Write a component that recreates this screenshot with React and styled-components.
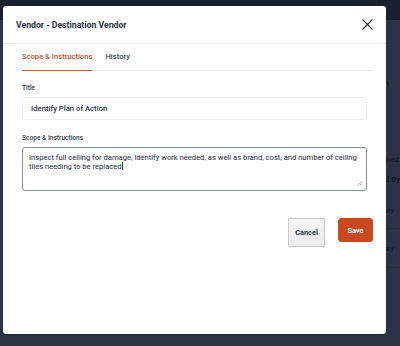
import React from "react";
import styled, { createGlobalStyle } from "styled-components";

const GlobalStyle = createGlobalStyle`
  html, body { margin: 0; padding: 0; }
  body {
    background: #2d3344;
    font-family: Roboto, "Liberation Sans", Arial, sans-serif;
    -webkit-font-smoothing: antialiased;
  }
`;

const Page = styled.div`
  position: relative;
  width: 400px;
  height: 346px;
  overflow: hidden;
  display: flex;
  flex-direction: column;
  background: #2d3344;
`;

const TopBar = styled.div`
  height: 20px;
  flex: none;
  background: #1b2030;
`;

const BgBody = styled.div`
  flex: 1;
  display: flex;
  flex-direction: column;
  padding-left: 366px;
  padding-top: 56px;
`;

const BgRow = styled.div`
  height: ${(p) => p.$h}px;
  display: flex;
  align-items: center;
  font-size: 8px;
  font-weight: ${(p) => (p.$bold ? 700 : 400)};
  color: #12172a;
  border-bottom: ${(p) => (p.$line ? "1px solid #272c3b" : "none")};
  white-space: nowrap;
`;

const Modal = styled.div`
  position: absolute;
  left: 3px;
  top: 6px;
  width: 383px;
  height: 328px;
  background: #fff;
  border-radius: 3px;
  box-shadow: 0 1px 2px rgba(0, 0, 0, 0.3);
  display: flex;
  flex-direction: column;
`;

const Header = styled.div`
  height: 37px;
  flex: none;
  display: flex;
  align-items: center;
  justify-content: space-between;
  padding: 0 12px 0 13px;
  border-bottom: 1px solid #eceef1;
`;

const Title = styled.h2`
  margin: 0;
  font-size: 8.7px;
  font-weight: 700;
  color: #2a3343;
`;

const CloseButton = styled.button`
  border: 0;
  background: none;
  padding: 0;
  width: 14px;
  height: 14px;
  display: flex;
  align-items: center;
  justify-content: center;
  cursor: pointer;
`;

const Tabs = styled.div`
  margin: 0 13px 0 13px;
  height: 26px;
  display: flex;
  align-items: stretch;
  gap: 13px;
  padding-left: 6px;
  border-bottom: 1px solid #f1f2f4;
`;

const Tab = styled.div`
  display: flex;
  align-items: center;
  font-size: 7.6px;
  font-weight: 500;
  color: ${(p) => (p.$active ? "#cc4f26" : "#3a4252")};
  border-bottom: 1.5px solid ${(p) => (p.$active ? "#d2582e" : "transparent")};
  padding: 0 0 1px;
  margin-bottom: -1px;
`;

const Body = styled.div`
  display: flex;
  flex-direction: column;
  padding: 13px 19px 0 19px;
`;

const Label = styled.label`
  font-size: 6.6px;
  font-weight: 500;
  color: #343c4b;
  margin-bottom: 5px;
`;

const Input = styled.div`
  height: 23px;
  box-sizing: border-box;
  border: 1px solid #eef0f2;
  border-radius: 3px;
  display: flex;
  align-items: center;
  padding-left: 8px;
  font-size: 7.7px;
  font-weight: 500;
  color: #2b3343;
  margin-bottom: 14px;
`;

const TextArea = styled.div`
  position: relative;
  height: 44px;
  box-sizing: border-box;
  border: 1px solid #858d9e;
  border-radius: 3px;
  padding: 5px 3px 5px 6px;
  font-size: 7.6px;
  font-weight: 400;
  line-height: 9px;
  color: #232b3a;
`;

const Caret = styled.span`
  display: inline-block;
  width: 0.6px;
  height: 8px;
  background: #333;
  vertical-align: -1px;
`;

const Grip = styled.svg`
  position: absolute;
  right: 4px;
  bottom: 4px;
`;

const Actions = styled.div`
  display: flex;
  justify-content: flex-end;
  align-items: flex-start;
  gap: 13px;
  padding: 27px 13px 0 0;
`;

const Button = styled.button`
  font-family: inherit;
  font-size: 7.4px;
  font-weight: 700;
  border-radius: ${(p) => (p.$primary ? "3px" : "1px")};
  cursor: pointer;
  width: ${(p) => (p.$primary ? 35 : 37)}px;
  height: ${(p) => (p.$primary ? 24 : 29)}px;
  padding: 0;
  color: ${(p) => (p.$primary ? "#fff" : "#2f3848")};
  background: ${(p) =>
    p.$primary ? "#c9491f" : "linear-gradient(#f6f6f6, #ebebeb)"};
  border: 1px solid ${(p) => (p.$primary ? "#c9491f" : "#c9c9c9")};
`;

export default function App() {
  return (
    <>
      <GlobalStyle />
      <Page>
        <TopBar />
        <BgBody>
          <BgRow $h={14}>Month</BgRow>
          <BgRow $h={62} />
          <BgRow $h={14}>Assigned</BgRow>
          <BgRow $h={26} $bold>Added By</BgRow>
          <BgRow $h={36} $line>On Duty</BgRow>
          <BgRow $h={38} $line>On Duty</BgRow>
        </BgBody>
        <Modal>
          <Header>
            <Title>Vendor - Destination Vendor</Title>
            <CloseButton aria-label="Close">
              <svg width="11" height="11" viewBox="0 0 11 11">
                <path
                  d="M1 1L10 10M10 1L1 10"
                  stroke="#2a3343"
                  strokeWidth="1.3"
                  strokeLinecap="round"
                />
              </svg>
            </CloseButton>
          </Header>
          <Tabs>
            <Tab $active>Scope &amp; Instructions</Tab>
            <Tab>History</Tab>
          </Tabs>
          <Body>
            <Label>Title</Label>
            <Input>Identify Plan of Action</Input>
            <Label>Scope &amp; Instructions</Label>
            <TextArea>
              Inspect full ceiling for damage, identify work needed, as well as
              brand, cost, and number of ceiling tiles needing to be replaced
              <Caret />
              <Grip width="5" height="5" viewBox="0 0 5 5">
                <path d="M0.5 4.5L4.5 0.5M2.5 4.5L4.5 2.5" stroke="#888" strokeWidth="0.6" />
              </Grip>
            </TextArea>
          </Body>
          <Actions>
            <Button>Cancel</Button>
            <Button $primary>Save</Button>
          </Actions>
        </Modal>
      </Page>
    </>
  );
}
